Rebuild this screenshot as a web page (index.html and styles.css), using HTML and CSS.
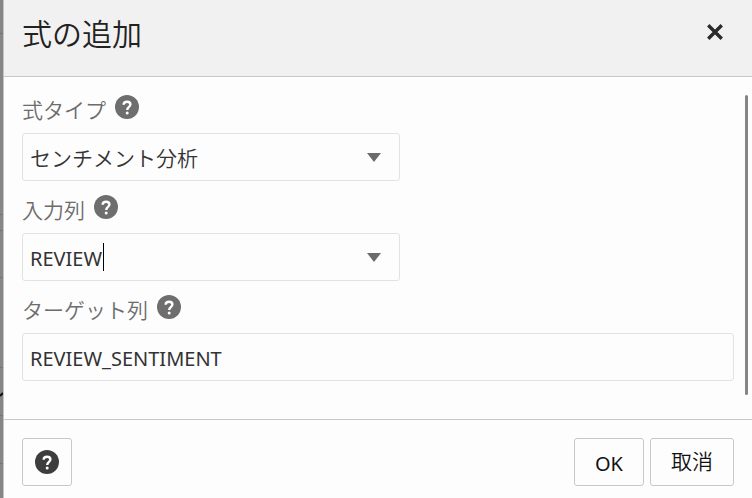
FILE: index.html
```
<!DOCTYPE html>
<html lang="ja">
<head>
    <meta charset="UTF-8">
    <meta name="viewport" content="width=device-width, initial-scale=1.0">
    <title>式の追加</title>
    <link rel="stylesheet" href="styles.css">
</head>
<body>
  <svg class="symbols" aria-hidden="true">
    <symbol id="help" viewBox="0 0 24 24">
      <circle cx="12" cy="12" r="12" fill="currentColor"/>
      <path d="M8.6 9.8C8.7 7.8 10.1 6.8 12.1 6.8C14.2 6.8 15.4 7.9 15.4 9.5C15.4 11.8 12.2 12 12.2 15" fill="none" stroke="#fff" stroke-width="2.4"/>
      <circle cx="12.2" cy="18" r="1.5" fill="#fff"/>
    </symbol>
    <symbol id="arrow" viewBox="0 0 14 9">
      <path d="M0 0H14L7 9Z" fill="currentColor"/>
    </symbol>
  </svg>
  <div class="backdrop">
    <svg class="page_edge" viewBox="0 0 3 498" aria-hidden="true">
      <path d="M0 33.5H3M0 214.5H3M0 230.5H3M0 277.5H3M0 367.5H3M0 415.5H3M0 463.5H3" stroke="#747474"/>
      <path d="M0 396L3 393" stroke="#111" stroke-width="2"/>
    </svg>
    <div class="dialog" role="dialog" aria-labelledby="title">
      <header class="dialog_header">
        <h1 id="title">式の追加</h1>
        <button type="button" class="close" aria-label="閉じる">
          <svg viewBox="0 0 16 16"><path d="M2 2L14 14M14 2L2 14" stroke="currentColor" stroke-width="3"/></svg>
        </button>
      </header>
      <form class="dialog_body" id="expression">
        <div class="field">
          <div class="field_label">
            <label for="type">式タイプ</label>
            <button type="button" class="help" aria-label="式タイプのヘルプ"><svg><use href="#help"/></svg></button>
          </div>
          <div class="combo">
            <select id="type" class="control">
              <option>センチメント分析</option>
            </select>
            <svg class="arrow"><use href="#arrow"/></svg>
          </div>
        </div>
        <div class="field">
          <div class="field_label">
            <label for="input">入力列</label>
            <button type="button" class="help" aria-label="入力列のヘルプ"><svg><use href="#help"/></svg></button>
          </div>
          <div class="combo">
            <input type="text" id="input" class="control" value="REVIEW">
            <span class="caret"></span>
            <svg class="arrow"><use href="#arrow"/></svg>
          </div>
        </div>
        <div class="field">
          <div class="field_label">
            <label for="target">ターゲット列</label>
            <button type="button" class="help" aria-label="ターゲット列のヘルプ"><svg><use href="#help"/></svg></button>
          </div>
          <input type="text" id="target" class="control" value="REVIEW_SENTIMENT">
        </div>
        <div class="scroll_thumb"></div>
      </form>
      <footer class="dialog_footer">
        <button type="button" class="btn btn_help" aria-label="ヘルプ"><svg><use href="#help"/></svg></button>
        <button type="submit" form="expression" class="btn">OK</button>
        <button type="button" class="btn btn_cancel">取消</button>
      </footer>
    </div>
  </div>
</body>
</html>
```
FILE: styles.css
```
*{
  margin: 0;
  padding: 0;
  box-sizing: border-box;
}
body, button, input, select{
  font-family: "Noto Sans", "Noto Sans CJK JP", sans-serif;
  font-size: 21px;
}
body{
  background: #868686;
}
button{
  border: none;
  background: none;
}
svg{
  display: block;
}
.symbols{
  position: absolute;
  width: 0;
  height: 0;
}
.backdrop{
  min-height: 100vh;
  display: flex;
}
.page_edge{
  flex: none;
  width: 3px;
  height: 498px;
}
.dialog{
  flex: 1;
  display: flex;
  flex-direction: column;
  background: #fdfdfd;
  border-left: 1px solid #c4c4c4;
}
.dialog_header{
  display: flex;
  justify-content: space-between;
  align-items: center;
  padding: 0 28px 8px 18px;
  background: #f1f1f1;
  border-bottom: 1px solid #c8c8c8;
}
.dialog_header h1{
  font-size: 30px;
  line-height: 68px;
  font-weight: 350;
  color: #222;
}
.close{
  padding-bottom: 4px;
  color: #2b2b2b;
}
.close svg{
  width: 18px;
  height: 18px;
}
.dialog_body{
  position: relative;
  flex: 1;
  padding: 4px 18px 38px;
}
.field_label{
  display: flex;
  align-items: center;
  gap: 9px;
  height: 52px;
  font-weight: 350;
  color: #6c6c6c;
}
.field_label label{
  padding-top: 4px;
}
.help{
  color: #6e6e6e;
}
.help svg, .btn_help svg{
  width: 24px;
  height: 24px;
}
.combo{
  position: relative;
  max-width: 378px;
}
.control{
  display: block;
  width: 100%;
  height: 48px;
  padding: 2px 7px 0;
  border: 1px solid #e2e2e2;
  border-radius: 3px;
  background: #fdfdfd;
  color: #333;
  font-size: 20px;
  appearance: none;
  outline: none;
}
select.control{
  padding-top: 1px;
  font-size: 21px;
  font-weight: 350;
}
.arrow{
  position: absolute;
  top: 20px;
  right: 19px;
  width: 14px;
  height: 9px;
  color: #6b6b6b;
  pointer-events: none;
}
.caret{
  position: absolute;
  top: 10px;
  left: 81px;
  width: 1px;
  height: 28px;
  background: #000;
}
.scroll_thumb{
  position: absolute;
  top: 18px;
  bottom: 24px;
  right: 4px;
  width: 3px;
  border-radius: 2px;
  background: #858585;
}
.dialog_footer{
  display: flex;
  gap: 6px;
  padding: 18px 18px 12px;
  border-top: 1px solid #c8c8c8;
}
.btn{
  height: 48px;
  padding: 2px 20px 0;
  border: 1px solid #c8c8c8;
  border-radius: 3px;
  color: #111;
  font-size: 20px;
}
.btn_help{
  margin-right: auto;
  padding: 0 12px;
  color: #3d3d3d;
}
.btn_cancel{
  padding: 0 20px 4px;
  font-size: 21px;
  font-weight: 350;
}
```
